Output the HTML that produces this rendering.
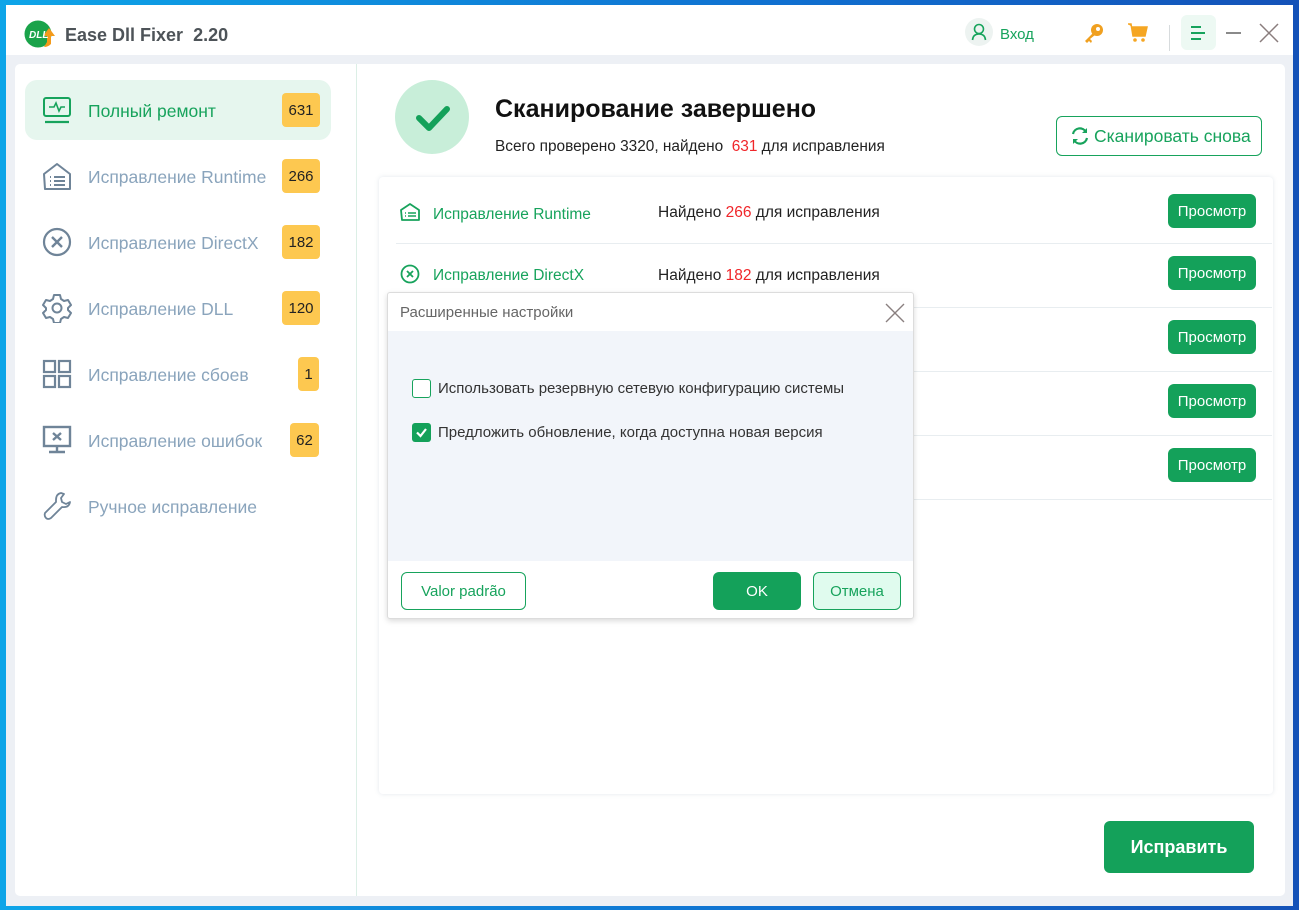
<!DOCTYPE html>
<html><head><meta charset="utf-8">
<style>
*{margin:0;padding:0;box-sizing:border-box}
body{width:1299px;height:910px;background:linear-gradient(90deg,#0ea5e8,#1070d0 60%,#1452b8);position:relative;overflow:hidden;font-family:"Liberation Sans","DejaVu Sans",sans-serif}
.win{position:absolute;left:6px;top:5px;width:1287px;height:901px;background:#edf0f5}
.hdr{position:absolute;left:0;top:0;width:1287px;height:50px;background:#fff}
.abs{position:absolute}
.panel{position:absolute;left:9px;top:59px;width:1270px;height:832px;background:#fff;border-radius:5px}
.nav{position:absolute;left:19px;width:306px;height:60px;display:flex;align-items:center;font-size:17.5px;color:#8aa4bc}
.nav svg{position:absolute;left:17px}
.nav span.t{position:absolute;left:63px;top:21px}
.badge{position:absolute;height:34px;background:#fdc850;border-radius:4px;color:#222;font-size:15px;display:flex;align-items:center;justify-content:center}
.row{position:absolute;left:17px;width:876px;height:64px;border-bottom:1px solid #e8edf0}
.btn{position:absolute;background:#14a15a;color:#fff;border-radius:6px;font-size:15px;display:flex;align-items:center;justify-content:center}
.red{color:#f0262a}
</style></head><body>
<div class="win">
<div class="hdr">
 <svg class="abs" style="left:18px;top:15px" width="32" height="30" viewBox="0 0 32 30"><circle cx="14" cy="14" r="13.5" fill="#1aa34a"/><path d="M25 8 L31 16 L27 16 L27 24 Q24 27 20 27 L23 22 L23 16 L19 16Z" fill="#f39a1a"/><text x="5" y="18" font-size="10" font-weight="bold" font-style="italic" fill="#fff" font-family="Liberation Sans">DLL</text></svg>
 <div class="abs" style="left:59px;top:20px;font-size:18px;font-weight:bold;color:#4d5358">Ease Dll Fixer&nbsp; 2.20</div>
 <div class="abs" style="left:959px;top:13px;width:28px;height:28px;border-radius:50%;background:#edf3f1"></div>
 <svg class="abs" style="left:965px;top:18px" width="16" height="18" viewBox="0 0 16 18"><circle cx="8" cy="6" r="4.5" fill="none" stroke="#17a35c" stroke-width="1.6"/><path d="M1.5 17 Q2 11 8 11 Q14 11 14.5 17" fill="none" stroke="#17a35c" stroke-width="1.6"/></svg>
 <div class="abs" style="left:994px;top:21px;font-size:15px;color:#17a35c">Вход</div>
 <svg class="abs" style="left:1076px;top:17px" width="24" height="24" viewBox="0 0 24 24"><circle cx="15" cy="8" r="6" fill="#f0a020"/><circle cx="16" cy="7" r="2" fill="#fff"/><path d="M11 11 L3 19 L5 21 L7 19 L9 21 L10 19 L8 17 L13 13Z" fill="#f0a020"/></svg>
 <svg class="abs" style="left:1121px;top:17px" width="22" height="22" viewBox="0 0 22 22"><path d="M1 2 L4 2 L6 14 L18 14 L20 5 L5 5" fill="#f5a623" stroke="#f5a623" stroke-width="1.5"/><circle cx="8" cy="18" r="1.8" fill="#f5a623"/><circle cx="16" cy="18" r="1.8" fill="#f5a623"/></svg>
 <div class="abs" style="left:1163px;top:20px;width:1px;height:26px;background:#d7dbdd"></div>
 <div class="abs" style="left:1175px;top:10px;width:35px;height:35px;border-radius:6px;background:#edf9f3"></div>
 <svg class="abs" style="left:1183px;top:20px" width="18" height="16" viewBox="0 0 18 16"><path d="M2 2h10M2 8h14M2 14h10" stroke="#17a35c" stroke-width="2"/></svg>
 <div class="abs" style="left:1220px;top:27px;width:15px;height:2px;background:#8a8a8a"></div>
 <svg class="abs" style="left:1253px;top:18px" width="20" height="20" viewBox="0 0 20 20"><path d="M1 1L19 19M19 1L1 19" stroke="#8a7d7d" stroke-width="1.5"/></svg>
</div>
<div class="panel">
 <div class="abs" style="left:341px;top:0;width:1px;height:832px;background:#dcefe6"></div>
 <div class="nav" style="left:10px;top:16px;background:#e6f6ee;border-radius:12px;width:306px">
  <svg width="30" height="30" viewBox="0 0 30 30"><rect x="2" y="3" width="26" height="18" rx="2" fill="none" stroke="#17a35c" stroke-width="2"/><path d="M7 12h5l2-4 3 8 2-4h4" fill="none" stroke="#17a35c" stroke-width="1.6"/><path d="M3 27h24" stroke="#17a35c" stroke-width="2.2"/></svg>
  <span class="t" style="color:#17a35c">Полный ремонт</span>
  <div class="badge" style="left:257px;width:38px">631</div>
 </div>
 <div class="nav" style="left:10px;top:82px">
  <svg width="30" height="30" viewBox="0 0 30 30"><path d="M2 13 L15 3 L28 13 L28 28 L3 28 L2 13Z" fill="none" stroke="#6f8498" stroke-width="2" stroke-linejoin="round"/><path d="M8 16h1M8 20h1M8 24h1M12 16h11M12 20h11M12 24h11" stroke="#6f8498" stroke-width="2"/></svg>
  <span class="t">Исправление Runtime</span>
  <div class="badge" style="left:257px;width:38px">266</div>
 </div>
 <div class="nav" style="left:10px;top:148px">
  <svg width="30" height="30" viewBox="0 0 30 30"><circle cx="15" cy="15" r="13" fill="none" stroke="#6f8498" stroke-width="2.2"/><path d="M10 10L20 20M20 10L10 20" stroke="#6f8498" stroke-width="2.4"/></svg>
  <span class="t">Исправление DirectX</span>
  <div class="badge" style="left:257px;width:38px">182</div>
 </div>
 <div class="nav" style="left:10px;top:214px">
  <svg width="30" height="30" viewBox="0 0 30 30"><path d="M12 2h6l1 4 3 2 4-1 3 5-3 3v2l3 3-3 5-4-1-3 2-1 4h-6l-1-4-3-2-4 1-3-5 3-3v-2l-3-3 3-5 4 1 3-2z" fill="none" stroke="#6f8498" stroke-width="2" stroke-linejoin="round"/><circle cx="15" cy="15" r="4.5" fill="none" stroke="#6f8498" stroke-width="2"/></svg>
  <span class="t">Исправление DLL</span>
  <div class="badge" style="left:257px;width:38px">120</div>
 </div>
 <div class="nav" style="left:10px;top:280px">
  <svg width="30" height="30" viewBox="0 0 30 30"><rect x="2" y="2" width="11" height="11" fill="none" stroke="#6f8498" stroke-width="2.2"/><rect x="17" y="2" width="11" height="11" fill="none" stroke="#6f8498" stroke-width="2.2"/><rect x="2" y="17" width="11" height="11" fill="none" stroke="#6f8498" stroke-width="2.2"/><rect x="17" y="17" width="11" height="11" fill="none" stroke="#6f8498" stroke-width="2.2"/></svg>
  <span class="t">Исправление сбоев</span>
  <div class="badge" style="left:273px;width:21px">1</div>
 </div>
 <div class="nav" style="left:10px;top:346px">
  <svg width="30" height="30" viewBox="0 0 30 30"><rect x="2" y="2" width="26" height="19" fill="none" stroke="#6f8498" stroke-width="2.4"/><path d="M11 8L19 15M19 8L11 15" stroke="#6f8498" stroke-width="2.4"/><path d="M15 21v5M7 27h16" stroke="#6f8498" stroke-width="2.4"/></svg>
  <span class="t">Исправление ошибок</span>
  <div class="badge" style="left:265px;width:29px">62</div>
 </div>
 <div class="nav" style="left:10px;top:412px">
  <svg width="30" height="30" viewBox="0 0 30 30"><path d="M19 2 Q14 3 14 9 L14 11 L3 22 Q2 25 4 27 Q6 29 9 27 L20 16 Q27 17 28 11 L24 13 L20 11 L19 7 L22 3 Z" fill="none" stroke="#6f8498" stroke-width="1.8" stroke-linejoin="round"/></svg>
  <span class="t">Ручное исправление</span>
 </div>

 <div class="abs" style="left:380px;top:16px;width:74px;height:74px;border-radius:50%;background:#c8eed9"></div>
 <svg class="abs" style="left:400px;top:40px" width="36" height="28" viewBox="0 0 36 28"><path d="M4 14L14 24L32 5" fill="none" stroke="#14a15a" stroke-width="6" stroke-linecap="round" stroke-linejoin="round"/></svg>
 <div class="abs" style="left:480px;top:31px;font-size:25px;font-weight:bold;color:#111">Сканирование завершено</div>
 <div class="abs" style="left:480px;top:74px;font-size:15.4px;color:#222">Всего проверено 3320, найдено&nbsp; <span class="red">631</span> для исправления</div>
 <div class="abs" style="left:1041px;top:52px;width:206px;height:40px;border:1px solid #17a35c;border-radius:6px;color:#17a35c;font-size:17.5px;display:flex;align-items:center;padding-left:37px">Сканировать снова</div>
 <svg class="abs" style="left:1055px;top:62px" width="20" height="20" viewBox="0 0 20 20"><path d="M16 6 A7 7 0 0 0 3 8" fill="none" stroke="#17a35c" stroke-width="2.2"/><path d="M4 14 A7 7 0 0 0 17 12" fill="none" stroke="#17a35c" stroke-width="2.2"/><path d="M17 2v5h-5z" fill="#17a35c"/><path d="M3 18v-5h5z" fill="#17a35c"/></svg>

 <div class="abs" style="left:364px;top:113px;width:894px;height:617px;background:#fff;border-radius:4px;box-shadow:0 0 5px rgba(100,120,150,.18)">
  <div class="row" style="top:3px;height:64px">
   <svg class="abs" style="left:4px;top:22px" width="20" height="20" viewBox="0 0 20 20"><path d="M1 8L10 2L19 8L19 18L2 18Z" fill="none" stroke="#17a35c" stroke-width="1.8" stroke-linejoin="round"/><path d="M5 11h1M5 14h1M8 11h8M8 14h8" stroke="#17a35c" stroke-width="1.6"/></svg>
   <div class="abs" style="left:37px;top:26px;font-size:15.5px;color:#17a35c">Исправление Runtime</div>
   <div class="abs" style="left:262px;top:24px;font-size:15.5px;color:#222">Найдено <span class="red">266</span> для исправления</div>
   <div class="btn" style="left:772px;top:14px;width:88px;height:34px">Просмотр</div>
  </div>
  <div class="row" style="top:67px">
   <svg class="abs" style="left:4px;top:20px" width="20" height="20" viewBox="0 0 20 20"><circle cx="10" cy="10" r="8.5" fill="none" stroke="#17a35c" stroke-width="1.8"/><path d="M7 7L13 13M13 7L7 13" stroke="#17a35c" stroke-width="1.8"/></svg>
   <div class="abs" style="left:37px;top:23px;font-size:15.5px;color:#17a35c">Исправление DirectX</div>
   <div class="abs" style="left:262px;top:23px;font-size:15.5px;color:#222">Найдено <span class="red">182</span> для исправления</div>
   <div class="btn" style="left:772px;top:12px;width:88px;height:34px">Просмотр</div>
  </div>
  <div class="row" style="top:131px"><div class="btn" style="left:772px;top:12px;width:88px;height:34px">Просмотр</div></div>
  <div class="row" style="top:195px"><div class="btn" style="left:772px;top:12px;width:88px;height:34px">Просмотр</div></div>
  <div class="row" style="top:259px"><div class="btn" style="left:772px;top:12px;width:88px;height:34px">Просмотр</div></div>
 </div>

 <div class="btn" style="left:1089px;top:757px;width:150px;height:52px;font-size:18px;font-weight:bold">Исправить</div>
</div>

<div class="abs" style="left:381px;top:287px;width:527px;height:327px;background:#fff;border:1px solid #dcdcdc;border-radius:3px;box-shadow:0 2px 6px rgba(0,0,0,.15)">
 <div class="abs" style="left:12px;top:11px;font-size:15px;color:#666">Расширенные настройки</div>
 <svg class="abs" style="left:497px;top:10px" width="20" height="20" viewBox="0 0 20 20"><path d="M1 1L19 19M19 1L1 19" stroke="#8a8080" stroke-width="1.4"/></svg>
 <div class="abs" style="left:0;top:38px;width:525px;height:230px;background:#f2f5fa"></div>
 <div class="abs" style="left:24px;top:86px;width:19px;height:19px;border:1.5px solid #17a35c;border-radius:3px;background:#fff"></div>
 <div class="abs" style="left:50px;top:87px;font-size:15px;color:#333">Использовать резервную сетевую конфигурацию системы</div>
 <div class="abs" style="left:24px;top:130px;width:19px;height:19px;border-radius:3px;background:#14a15a"></div>
 <svg class="abs" style="left:27px;top:133px" width="13" height="13" viewBox="0 0 13 13"><path d="M2 6.5L5.5 10L11 3" fill="none" stroke="#fff" stroke-width="2.2"/></svg>
 <div class="abs" style="left:50px;top:131px;font-size:15px;color:#333">Предложить обновление, когда доступна новая версия</div>
 <div class="abs" style="left:13px;top:279px;width:125px;height:38px;border:1px solid #17a35c;border-radius:6px;color:#17a35c;font-size:15px;display:flex;align-items:center;justify-content:center">Valor padrão</div>
 <div class="btn" style="left:325px;top:279px;width:88px;height:38px">OK</div>
 <div class="abs" style="left:425px;top:279px;width:88px;height:38px;border:1px solid #17a35c;border-radius:6px;background:#e0fbee;color:#17a35c;font-size:15px;display:flex;align-items:center;justify-content:center">Отмена</div>
</div>
</div>
</body></html>
